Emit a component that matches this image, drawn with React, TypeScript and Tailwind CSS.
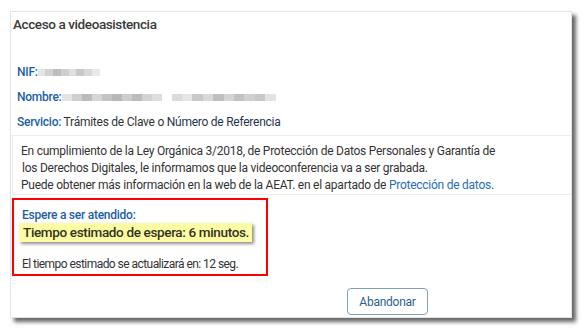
import React from "react";

const Blur = ({ w, shades }: { w: number; shades: string[] }) => (
  <span className="inline-flex items-center h-[10px] blur-[0.6px]" style={{ width: w }}>
    {shades.map((s, i) => (
      <span key={i} className="h-[7px] flex-1" style={{ backgroundColor: s }} />
    ))}
  </span>
);

export default function App() {
  return (
    <div className="w-[583px] h-[329px] bg-white overflow-hidden" style={{ fontFamily: "Roboto, 'Liberation Sans', sans-serif" }}>
      <div className="ml-[10px] mt-[11px] w-[562px] h-[307px] bg-white border border-[#e4e4e4] shadow-[4px_4px_4px_rgba(0,0,0,0.6)] flex flex-col text-[12px] tracking-[-0.25px] text-[#333]">
        <div className="pl-[2px] pt-[2px] text-[13.5px] tracking-[-0.4px] leading-[20px] font-medium text-[#3a3a3a]">Acceso a videoasistencia</div>
        <div className="mt-[26px] pl-[6px] leading-[25px]">
          <div className="flex items-center">
            <span className="font-medium text-[#1d5fa6]">NIF:</span>
            <Blur w={62} shades={["#e6e6e6", "#d2d2d2", "#bdbdbd", "#cfcfcf", "#e0e0e0", "#c8c8c8", "#d8d8d8", "#e8e8e8"]} />
          </div>
          <div className="flex items-center">
            <span className="font-medium text-[#1d5fa6]">Nombre:</span>
            <Blur w={100} shades={["#e4e4e4", "#cfcfcf", "#bbbbbb", "#d6d6d6", "#c4c4c4", "#b8b8b8", "#cdcdcd", "#bcbcbc", "#d2d2d2", "#dddddd"]} />
            <span className="w-[10px]" />
            <Blur w={104} shades={["#dadada", "#e6e6e6", "#c9c9c9", "#d9d9d9", "#bfbfbf", "#d4d4d4", "#c2c2c2", "#d0d0d0", "#c8c8c8", "#e2e2e2"]} />
          </div>
          <div>
            <span className="font-medium text-[#1d5fa6]">Servicio:</span> Trámites de Clave o <span className="text-[#1f3550]">Número de Referencia</span>
          </div>
        </div>
        <div className="border-t border-[#ececec]" />
        <div className="ml-[1px] border-l border-b border-[#ececec] pl-[8px] pt-[7px] leading-[17px] text-[#333]">
          <div>En cumplimiento de la Ley Orgánica 3/2018, de Protección de Datos Personales y Garantía de</div>
          <div className="pl-[1px]">los Derechos Digitales, le informamos que la videoconferencia va a ser grabada.</div>
          <div>
            Puede obtener más información en la web de la AEAT. en el apartado de <span className="text-[#2a6cb5]">Protección de datos</span>.
          </div>
        </div>
        <div className="ml-[1px] mt-[3px] w-[256px] h-[78px] border-2 border-[#ff0000] flex flex-col">
          <div className="pl-[8px] pt-[7px] leading-[16px] font-medium text-[#1d5fa6]">Espere a ser atendido:</div>
          <div className="ml-[5px] w-[233px] h-[19px] bg-[#fcfca4] shadow-[2px_2px_3px_rgba(0,0,0,0.45)] pl-[4px] leading-[19px] text-[13.5px] tracking-[-0.35px] font-medium text-[#33331f] whitespace-nowrap">
            Tiempo estimado de espera: 6 minutos.
          </div>
          <div className="pl-[8px] mt-[14px] leading-[16px] text-[12px] tracking-[-0.55px] text-[#333] whitespace-nowrap">El tiempo estimado se actualizará en: 12 seg.</div>
        </div>
        <div className="flex justify-start pl-[336px] mt-[12px]">
          <button className="w-[81px] h-[27px] border border-[#7f9fbd] rounded-[4px] text-[12px] text-[#2b5f97] bg-white">Abandonar</button>
        </div>
      </div>
    </div>
  );
}
